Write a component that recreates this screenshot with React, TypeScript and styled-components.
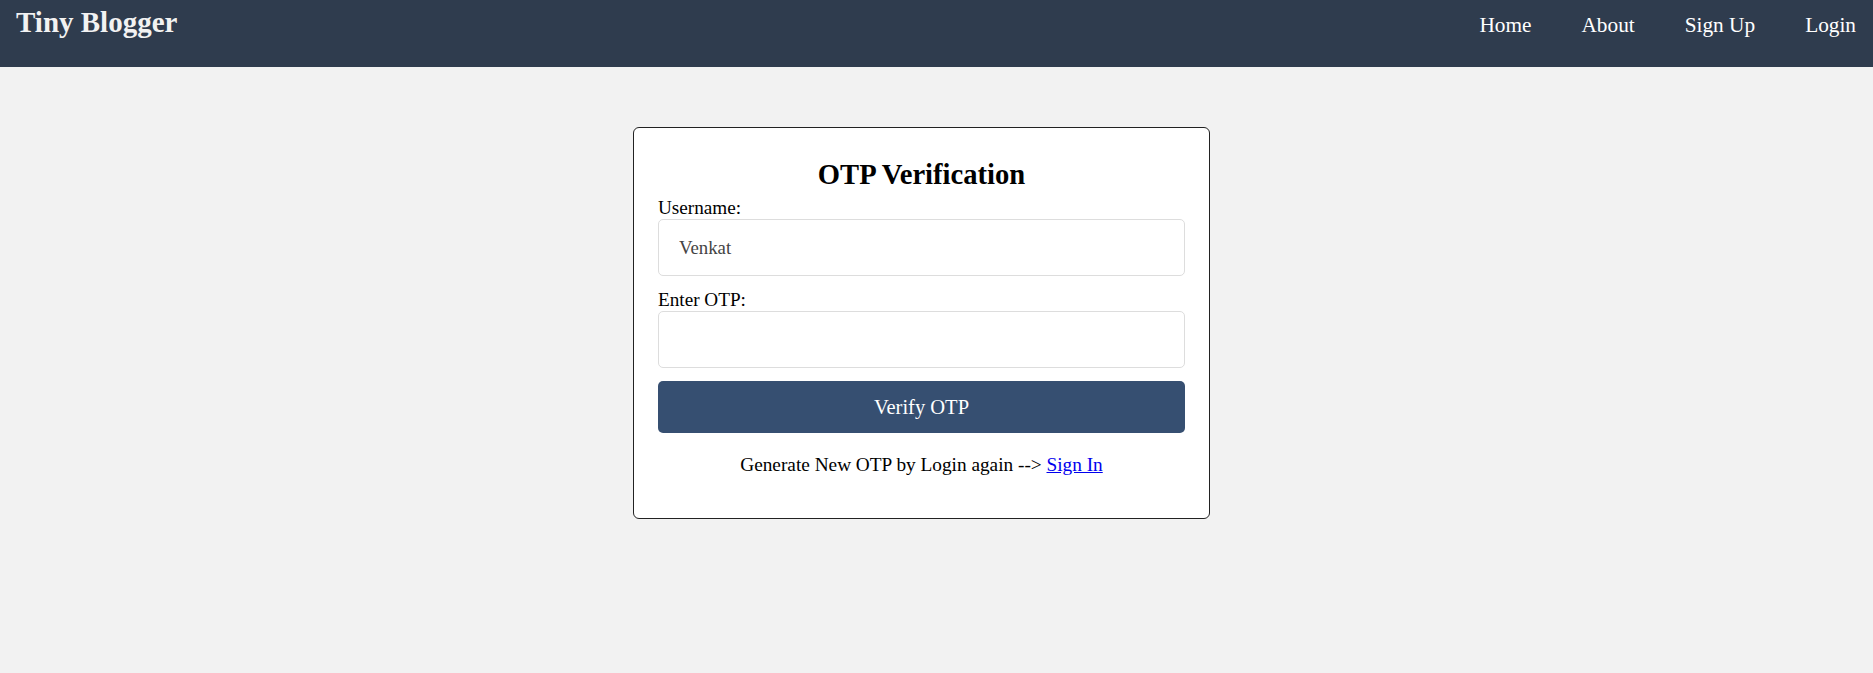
import React from "react";
import styled, { createGlobalStyle } from "styled-components";

const GlobalStyle = createGlobalStyle`
  html, body {
    margin: 0;
    padding: 0;
    background: #f2f2f2;
    font-family: "Liberation Serif", "Times New Roman", serif;
  }
  * { box-sizing: border-box; }
`;

const Header = styled.header`
  height: 67px;
  background: #2f3c4e;
  display: flex;
  justify-content: space-between;
  align-items: baseline;
  padding: 6px 17px 0 16px;
`;

const Logo = styled.h1`
  margin: 0;
  font-size: 29px;
  font-weight: bold;
  color: #f2f2f2;
  line-height: normal;
`;

const Nav = styled.nav`
  display: flex;
  gap: 50px;
`;

const NavLink = styled.a`
  color: #ffffff;
  text-decoration: none;
  font-size: 21.3px;
  line-height: normal;
`;

const Main = styled.main`
  display: flex;
  justify-content: center;
  padding: 60px 30px 0 0;
`;

const Card = styled.form`
  width: 577px;
  background: #ffffff;
  border: 1px solid #222;
  border-radius: 6px;
  padding: 31px 24px 42px;
  display: flex;
  flex-direction: column;
`;

const Title = styled.h2`
  margin: 0 0 6px;
  text-align: center;
  font-size: 28.6px;
  font-weight: bold;
  color: #000;
  line-height: 32px;
`;

const Label = styled.label`
  font-size: 19.2px;
  color: #000;
  line-height: 22px;
`;

const Input = styled.input`
  height: 57px;
  width: 100%;
  border: 1px solid #ddd;
  border-radius: 5px;
  padding: 0 20px;
  font-family: "Liberation Serif", "Times New Roman", serif;
  font-size: 18.8px;
  color: #444;
  background: #fff;
  margin-bottom: 13px;
  outline: none;
`;

const Button = styled.button`
  height: 52px;
  width: 100%;
  border: none;
  border-radius: 5px;
  background: #364f71;
  color: #ffffff;
  font-family: "Liberation Serif", "Times New Roman", serif;
  font-size: 20.5px;
  cursor: pointer;
`;

const Note = styled.p`
  margin: 21px 0 0;
  text-align: center;
  font-size: 19.3px;
  color: #000;
  line-height: 22px;
`;

const Link = styled.a`
  color: #0000ee;
  text-decoration: underline;
`;

export default function App() {
  return (
    <>
      <GlobalStyle />
      <Header>
        <Logo>Tiny Blogger</Logo>
        <Nav>
          <NavLink href="#">Home</NavLink>
          <NavLink href="#">About</NavLink>
          <NavLink href="#">Sign Up</NavLink>
          <NavLink href="#">Login</NavLink>
        </Nav>
      </Header>
      <Main>
        <Card onSubmit={(e) => e.preventDefault()}>
          <Title>OTP Verification</Title>
          <Label htmlFor="username">Username:</Label>
          <Input id="username" defaultValue="Venkat" />
          <Label htmlFor="otp">Enter OTP:</Label>
          <Input id="otp" />
          <Button type="submit">Verify OTP</Button>
          <Note>
            Generate New OTP by Login again --&gt; <Link href="#">Sign In</Link>
          </Note>
        </Card>
      </Main>
    </>
  );
}
